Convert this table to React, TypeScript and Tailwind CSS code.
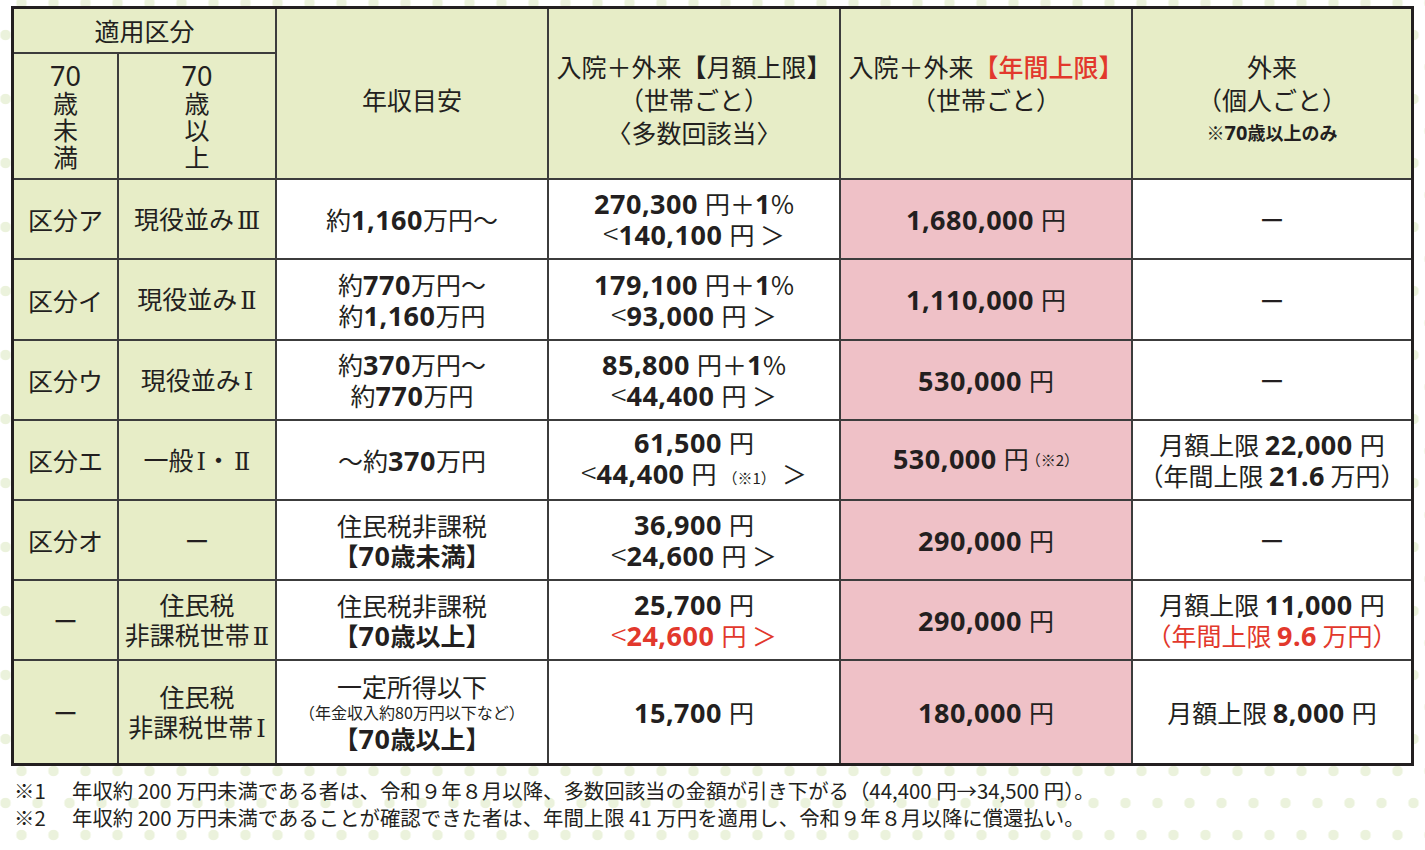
import React from 'react';

// bold figure used for the yen amounts
function N({ children }: { children: React.ReactNode }) {
  return <span className="font-['Noto_Sans',sans-serif] font-bold text-[27px] tracking-[0.5px]">{children}</span>;
}

function Yen() {
  return <span className="ml-[7px]">円</span>;
}

// roman numeral with serifs, as in the printed table
function R({ children }: { children: React.ReactNode }) {
  return <span className="font-['DejaVu_Serif','DejaVu_Sans',serif] text-[24px] ml-[3px]">{children}</span>;
}

function Lt() {
  return <span className="text-[29px] leading-[20px] font-light">&lt;</span>;
}

const green = 'bg-[#e7edc7]';
const cell = 'flex flex-col items-center justify-center text-center leading-[30px]';
const head = `${green} row-span-2 flex flex-col items-center justify-center text-center leading-[33px] pt-[12px]`;

function Dash() {
  return <span>ー</span>;
}

export default function App() {
  return (
    <div className="min-h-[850px] w-full bg-white text-[#231f20] text-[25px] font-['Noto_Sans_CJK_JP',sans-serif] [background-image:radial-gradient(circle_at_16px_32px,#ebf2dc_5px,transparent_5.6px),radial-gradient(circle_at_16px_32px,#ebf2dc_5px,transparent_5.6px)] [background-size:32px_64px] [background-position:5.5px_-29px,-10.5px_3px] pt-[6px]">
      <div className="ml-[11px] w-[1403px] border-[3px] border-[#231f20] bg-[#3c3c3c] grid gap-[2px] grid-cols-[103px_156px_270px_290px_290px_278px] grid-rows-[43px_124px_78px_79px_78px_78px_78px_78px_102px]">
        {/* header */}
        <div className={`${green} col-span-2 flex items-center justify-center`}>適用区分</div>
        <div className={head}>年収目安</div>
        <div className={head}>
          <div>入院＋外来<span className="font-bold">【</span>月額上限<span className="font-bold">】</span></div>
          <div>（世帯ごと）</div>
          <div>〈多数回該当〉</div>
        </div>
        <div className={head}>
          <div>
            入院＋外来<span className="text-[#e2382c] font-medium">【年間上限】</span>
          </div>
          <div>（世帯ごと）</div>
          <div className="invisible">.</div>
        </div>
        <div className={head}>
          <div>外来</div>
          <div>（個人ごと）</div>
          <div className="text-[18px] font-bold">
            ※<span className="font-['Noto_Sans',sans-serif] text-[20px]">70</span>歳以上のみ
          </div>
        </div>
        <div className={`${green} flex flex-col items-center justify-center leading-[27px]`}>
          <span className="font-['Noto_Sans',sans-serif] text-[27px]">70</span>
          <span>歳</span>
          <span>未</span>
          <span>満</span>
        </div>
        <div className={`${green} flex flex-col items-center justify-center leading-[27px]`}>
          <span className="font-['Noto_Sans',sans-serif] text-[27px]">70</span>
          <span>歳</span>
          <span>以</span>
          <span>上</span>
        </div>

        {/* 区分ア */}
        <div className={`${green} ${cell}`}>区分ア</div>
        <div className={`${green} ${cell}`}><div>現役並み<R>Ⅲ</R></div></div>
        <div className={`bg-white ${cell}`}>
          <div>約<N>1,160</N>万円〜</div>
        </div>
        <div className={`bg-white ${cell}`}>
          <div><N>270,300</N><Yen />＋<N>1</N>%</div>
          <div><Lt /><N>140,100</N><Yen /> ＞</div>
        </div>
        <div className={`bg-[#efc1c7] ${cell}`}>
          <div><N>1,680,000</N><Yen /></div>
        </div>
        <div className={`bg-white ${cell}`}><Dash /></div>

        {/* 区分イ */}
        <div className={`${green} ${cell}`}>区分イ</div>
        <div className={`${green} ${cell}`}><div>現役並み<R>Ⅱ</R></div></div>
        <div className={`bg-white ${cell}`}>
          <div>約<N>770</N>万円〜</div>
          <div>約<N>1,160</N>万円</div>
        </div>
        <div className={`bg-white ${cell}`}>
          <div><N>179,100</N><Yen />＋<N>1</N>%</div>
          <div><Lt /><N>93,000</N><Yen /> ＞</div>
        </div>
        <div className={`bg-[#efc1c7] ${cell}`}>
          <div><N>1,110,000</N><Yen /></div>
        </div>
        <div className={`bg-white ${cell}`}><Dash /></div>

        {/* 区分ウ */}
        <div className={`${green} ${cell}`}>区分ウ</div>
        <div className={`${green} ${cell}`}><div>現役並み<R>Ⅰ</R></div></div>
        <div className={`bg-white ${cell}`}>
          <div>約<N>370</N>万円〜</div>
          <div>約<N>770</N>万円</div>
        </div>
        <div className={`bg-white ${cell}`}>
          <div><N>85,800</N><Yen />＋<N>1</N>%</div>
          <div><Lt /><N>44,400</N><Yen /> ＞</div>
        </div>
        <div className={`bg-[#efc1c7] ${cell}`}>
          <div><N>530,000</N><Yen /></div>
        </div>
        <div className={`bg-white ${cell}`}><Dash /></div>

        {/* 区分エ */}
        <div className={`${green} ${cell}`}>区分エ</div>
        <div className={`${green} ${cell}`}><div>一般<R>Ⅰ</R>・<R>Ⅱ</R></div></div>
        <div className={`bg-white ${cell}`}>
          <div>〜約<N>370</N>万円</div>
        </div>
        <div className={`bg-white ${cell}`}>
          <div><N>61,500</N><Yen /></div>
          <div>
            <Lt /><N>44,400</N><Yen />
            <span className="text-[15px] mx-[6px]">（※1）</span>＞
          </div>
        </div>
        <div className={`bg-[#efc1c7] ${cell}`}>
          <div>
            <N>530,000</N><Yen />
            <span className="relative -top-[3px] -ml-[3px] text-[15px]">（※2）</span>
          </div>
        </div>
        <div className={`bg-white ${cell}`}>
          <div>月額上限 <N>22,000</N><Yen /></div>
          <div>（年間上限 <N>21.6</N> 万円）</div>
        </div>

        {/* 区分オ */}
        <div className={`${green} ${cell}`}>区分オ</div>
        <div className={`${green} ${cell}`}><Dash /></div>
        <div className={`bg-white ${cell}`}>
          <div>住民税非課税</div>
          <div className="font-bold">【<N>70</N>歳未満】</div>
        </div>
        <div className={`bg-white ${cell}`}>
          <div><N>36,900</N><Yen /></div>
          <div><Lt /><N>24,600</N><Yen /> ＞</div>
        </div>
        <div className={`bg-[#efc1c7] ${cell}`}>
          <div><N>290,000</N><Yen /></div>
        </div>
        <div className={`bg-white ${cell}`}><Dash /></div>

        {/* 非課税世帯Ⅱ */}
        <div className={`${green} ${cell}`}><Dash /></div>
        <div className={`${green} ${cell}`}>
          <div>住民税</div>
          <div>非課税世帯<R>Ⅱ</R></div>
        </div>
        <div className={`bg-white ${cell}`}>
          <div>住民税非課税</div>
          <div className="font-bold">【<N>70</N>歳以上】</div>
        </div>
        <div className={`bg-white ${cell}`}>
          <div><N>25,700</N><Yen /></div>
          <div className="text-[#e2382c]"><Lt /><N>24,600</N><Yen /> ＞</div>
        </div>
        <div className={`bg-[#efc1c7] ${cell}`}>
          <div><N>290,000</N><Yen /></div>
        </div>
        <div className={`bg-white ${cell}`}>
          <div>月額上限 <N>11,000</N><Yen /></div>
          <div className="text-[#e2382c]">（年間上限 <N>9.6</N> 万円）</div>
        </div>

        {/* 非課税世帯Ⅰ */}
        <div className={`${green} ${cell}`}><Dash /></div>
        <div className={`${green} ${cell}`}>
          <div>住民税</div>
          <div>非課税世帯<R>Ⅰ</R></div>
        </div>
        <div className={`bg-white ${cell}`}>
          <div>一定所得以下</div>
          <div className="text-[16px] leading-[22px]">（年金収入約80万円以下など）</div>
          <div className="font-bold">【<N>70</N>歳以上】</div>
        </div>
        <div className={`bg-white ${cell}`}>
          <div><N>15,700</N><Yen /></div>
        </div>
        <div className={`bg-[#efc1c7] ${cell}`}>
          <div><N>180,000</N><Yen /></div>
        </div>
        <div className={`bg-white ${cell}`}>
          <div>月額上限 <N>8,000</N><Yen /></div>
        </div>
      </div>

      <div className="mt-[11px] ml-[14px] text-[20.4px] leading-[27px]">
        <div className="flex">
          <span className="w-[58px] shrink-0">※1</span>
          <span>年収約 200 万円未満である者は、令和９年８月以降、多数回該当の金額が引き下がる（44,400 円→34,500 円）。</span>
        </div>
        <div className="flex">
          <span className="w-[58px] shrink-0">※2</span>
          <span>年収約 200 万円未満であることが確認できた者は、年間上限 41 万円を適用し、令和９年８月以降に償還払い。</span>
        </div>
      </div>
    </div>
  );
}
